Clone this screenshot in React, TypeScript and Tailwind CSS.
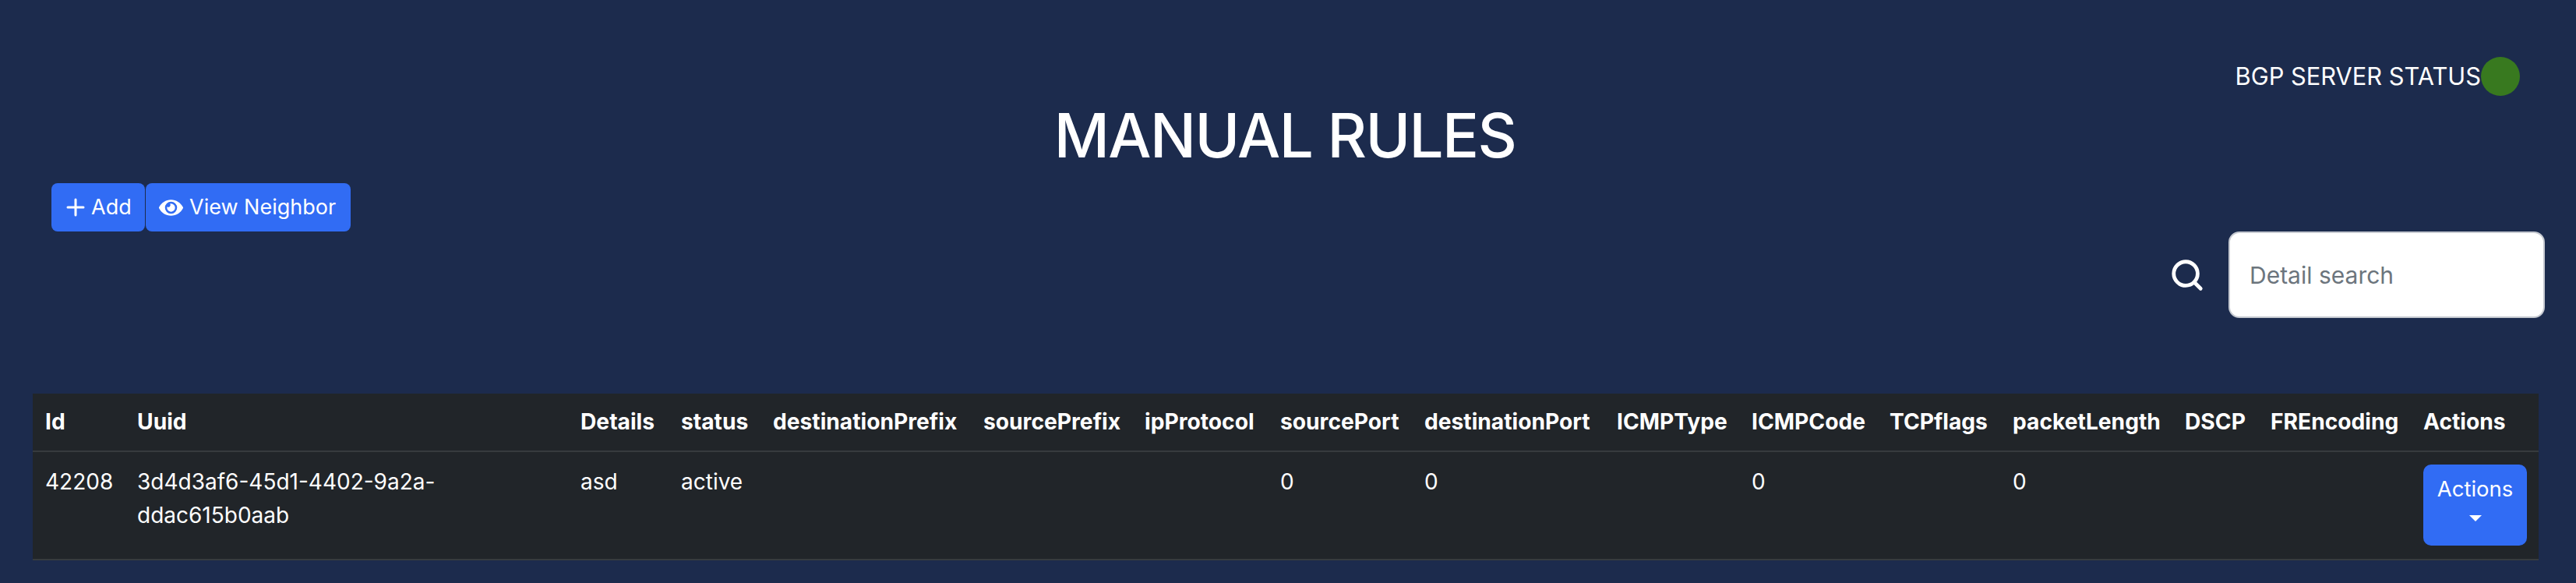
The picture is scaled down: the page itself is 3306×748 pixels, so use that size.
import { FaEye } from "react-icons/fa";
import { Search } from "lucide-react";

const COLUMNS = [
  { label: "Id", width: 118 },
  { label: "Uuid", width: 569 },
  { label: "Details", width: 129 },
  { label: "status", width: 118 },
  { label: "destinationPrefix", width: 270 },
  { label: "sourcePrefix", width: 207 },
  { label: "ipProtocol", width: 174 },
  { label: "sourcePort", width: 185 },
  { label: "destinationPort", width: 247 },
  { label: "ICMPType", width: 173 },
  { label: "ICMPCode", width: 177 },
  { label: "TCPflags", width: 158 },
  { label: "packetLength", width: 221 },
  { label: "DSCP", width: 110 },
  { label: "FREncoding", width: 196 },
  { label: "Actions", width: 164 },
];

const BUTTON = "flex items-center rounded-[8px] bg-[#316cf4] text-white";

export default function App() {
  return (
    <div className="h-[748px] bg-[#1c2b4d] font-['Inter',sans-serif] text-white">
      <div className="flex justify-end pt-[73px] pr-[72px]">
        <div className="flex items-center">
          <span className="text-[30.8px] leading-[50px]">BGP SERVER STATUS</span>
          <span className="h-[50px] w-[50px] rounded-full bg-[#38791f]" />
        </div>
      </div>

      <h1 className="mt-[3px] pr-[8px] text-center text-[78px] leading-[96px] font-medium tracking-[-1.6px]">MANUAL RULES</h1>

      <div className="mt-[13px] flex gap-px pl-[66px]">
        <button className={`${BUTTON} h-[62px] w-[120px] gap-[8px] pl-[19px] text-[27px]`}>
          <svg width="24" height="24" viewBox="0 0 24 24" fill="none" stroke="currentColor" strokeWidth="3" strokeLinecap="round">
            <path d="M12 2v20M2 12h20" />
          </svg>
          Add
        </button>
        <button className={`${BUTTON} h-[62px] w-[263px] gap-[8px] pl-[17px] text-[27px]`}>
          <FaEye size={31} />
          View Neighbor
        </button>
      </div>

      <div className="flex items-center justify-end pr-[40px]">
        <Search size={46} strokeWidth={2.5} className="mr-[30px]" />
        <input
          placeholder="Detail search"
          className="h-[111px] w-[406px] rounded-[14px] border-2 border-[#c5c9d0] bg-white pl-[25px] text-[30px] text-[#212529] placeholder:text-[#6c757d]"
        />
      </div>

      <div className="mt-[97px] pr-[48px] pl-[42px]">
        <table className="w-full table-fixed border-collapse bg-[#212529] text-[28px] leading-[43px]">
          <colgroup>
            {COLUMNS.map((c) => (
              <col key={c.label} style={{ width: c.width }} />
            ))}
          </colgroup>
          <thead>
            <tr className="h-[74px] border-b-2 border-[#373b3e]">
              {COLUMNS.map((c) => (
                <th key={c.label} className="pl-[16px] text-left text-[28.2px] font-bold whitespace-nowrap">{c.label}</th>
              ))}
            </tr>
          </thead>
          <tbody>
            <tr className="h-[139px] border-b-2 border-[#373b3e] align-top">
              <td className="pt-[17px] pl-[16px]">42208</td>
              <td className="pt-[17px] pr-[16px] pl-[16px]">3d4d3af6-45d1-4402-9a2a-ddac615b0aab</td>
              <td className="pt-[17px] pl-[16px]">asd</td>
              <td className="pt-[17px] pl-[16px]">active</td>
              <td />
              <td />
              <td />
              <td className="pt-[17px] pl-[16px]">0</td>
              <td className="pt-[17px] pl-[16px]">0</td>
              <td />
              <td className="pt-[17px] pl-[16px]">0</td>
              <td />
              <td className="pt-[17px] pl-[16px]">0</td>
              <td />
              <td />
              <td className="pt-[16px] pl-[16px]">
                <button className="flex h-[104px] w-[133px] flex-col items-center rounded-[10px] bg-[#316cf4] pt-[10px] text-[27.5px]">
                  Actions
                  <span className="mt-[12px] h-0 w-0 border-x-[8px] border-t-[8px] border-x-transparent border-t-white" />
                </button>
              </td>
            </tr>
          </tbody>
        </table>
      </div>
    </div>
  );
}
